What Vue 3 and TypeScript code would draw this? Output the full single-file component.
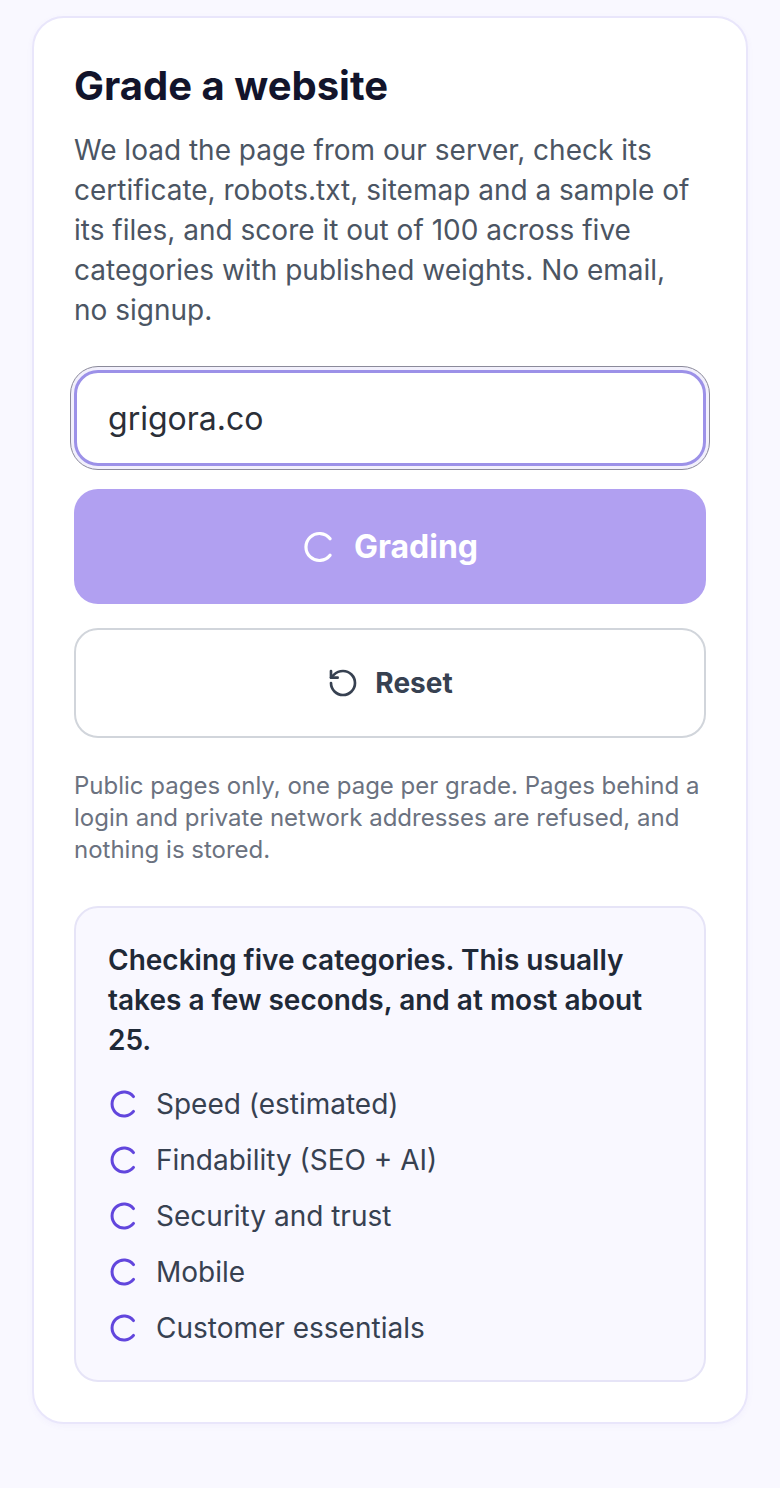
<script setup lang="ts">
const categories: string[] = [
  'Speed (estimated)',
  'Findability (SEO + AI)',
  'Security and trust',
  'Mobile',
  'Customer essentials',
]
</script>

<template>
  <main class="page">
    <section class="card">
      <h1 class="title">Grade a website</h1>
      <p class="lead">We load the page from our server, check its certificate, robots.txt, sitemap and a sample of its files, and score it out of 100 across five categories with published weights. No email, no signup.</p>
      <form class="form" @submit.prevent>
        <input class="input" type="text" value="grigora.co" />
        <button class="btn primary" type="button">
          <svg class="spin-w" viewBox="0 0 32 32" fill="none"><path d="M28.1 7.7A13.5 13.5 0 1 0 28.1 24.3" stroke="#fff" stroke-width="3.2" stroke-linecap="round"/></svg>
          <span>Grading</span>
        </button>
        <button class="btn secondary" type="button">
          <svg class="reset-icon" viewBox="0 0 24 24" fill="none" stroke="#374151" stroke-width="2" stroke-linecap="round" stroke-linejoin="round"><path d="M3 12a9 9 0 1 0 9-9 9.75 9.75 0 0 0-6.74 2.74L3 8"/><path d="M3 3v5h5"/></svg>
          <span>Reset</span>
        </button>
      </form>
      <p class="hint">Public pages only, one page per grade. Pages behind a login and private network addresses are refused, and nothing is stored.</p>
      <div class="panel">
        <p class="panel-title">Checking five categories. This usually takes a few seconds, and at most about 25.</p>
        <ul class="list">
          <li v-for="c in categories" :key="c" class="item">
            <svg class="spin-p" viewBox="0 0 32 32" fill="none"><path d="M25.5 8.6A12 12 0 1 0 25.5 23.4" stroke="#6246dd" stroke-width="3" stroke-linecap="round"/></svg>
            <span>{{ c }}</span>
          </li>
        </ul>
      </div>
    </section>
  </main>
</template>

<style>
html, body { margin: 0; background: #f9f8ff; }
</style>

<style scoped>
.page {
  box-sizing: border-box;
  min-height: 1488px;
  padding: 16px 32px 64px;
  background: #f9f8ff;
  font-family: Inter, "Liberation Sans", sans-serif;
}
.card {
  box-sizing: border-box;
  height: 1408px;
  padding: 44px 40px 40px;
  background: #fff;
  border: 2px solid #e9e6fb;
  border-radius: 32px;
  box-shadow: 0 2px 6px rgba(110, 90, 220, 0.05);
}
.title {
  margin: 0;
  font-size: 40px;
  line-height: 48px;
  font-weight: 700;
  color: #12142b;
  letter-spacing: 0;
}
.lead {
  margin: 20px 0 0;
  font-size: 28px;
  line-height: 40px;
  color: #4b5563;
}
.form {
  display: flex;
  flex-direction: column;
  margin-top: 40px;
}
.input {
  box-sizing: border-box;
  display: block;
  width: 100%;
  height: 96px;
  padding: 0 31px;
  font: 400 32px Inter, "Liberation Sans", sans-serif;
  color: #2b2f38;
  background: #fff;
  border: 3px solid #9c91e8;
  border-radius: 24px;
  outline: 1.5px solid #8b8a9a;
  outline-offset: 3.5px;
  box-shadow: 0 0 0 3.5px #f2f0fc;
}
.btn {
  box-sizing: border-box;
  display: flex;
  align-items: center;
  justify-content: center;
  width: 100%;
  font-family: inherit;
  border-radius: 24px;
}
.primary {
  margin-top: 23px;
  height: 115px;
  gap: 20px;
  border: 0;
  background: #b1a0f1;
  color: #fff;
  font-size: 32px;
  font-weight: 700;
}
.secondary {
  margin-top: 24px;
  height: 110px;
  gap: 16px;
  background: #fff;
  border: 2px solid #d1d5db;
  color: #374151;
  font-size: 28px;
  font-weight: 700;
}
.spin-w { width: 32px; height: 32px; }
.reset-icon { width: 32px; height: 32px; }
.hint {
  margin: 32px 0 0;
  font-size: 24px;
  line-height: 32px;
  color: #6b7280;
}
.panel {
  box-sizing: border-box;
  margin-top: 40px;
  height: 476px;
  padding: 32px;
  background: #f9f8ff;
  border: 2px solid #e6e4f7;
  border-radius: 24px;
}
.panel-title {
  margin: 0;
  font-size: 28px;
  line-height: 40px;
  font-weight: 600;
  color: #1f2937;
}
.list {
  list-style: none;
  margin: 24px 0 0;
  padding: 0;
  display: flex;
  flex-direction: column;
  gap: 16px;
}
.item {
  display: flex;
  align-items: center;
  gap: 16px;
  font-size: 28px;
  line-height: 40px;
  color: #374151;
}
.spin-p { width: 32px; height: 32px; flex: none; }
</style>
